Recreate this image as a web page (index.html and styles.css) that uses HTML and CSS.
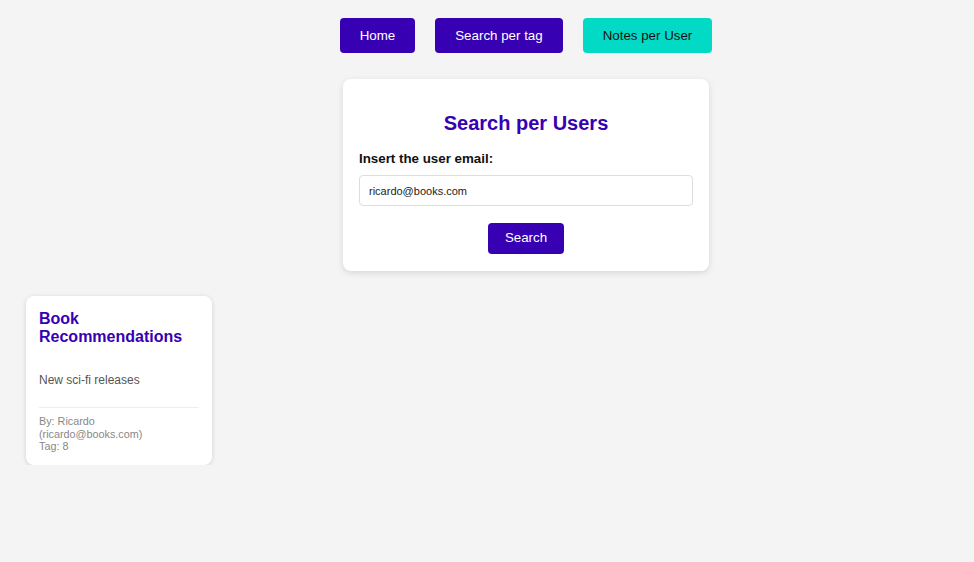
FILE: index.html
```html
<!DOCTYPE html>
<html>
<head>
<meta charset="utf-8">
<link rel="stylesheet" href="styles.css">
</head>
<body>
<div class="top">
  <nav class="nav">
    <button class="btn primary">Home</button>
    <button class="btn primary">Search per tag</button>
    <button class="btn secondary">Notes per User</button>
  </nav>
  <section class="search-card">
    <h2 class="title">Search per Users</h2>
    <label class="label">Insert the user email:</label>
    <input class="input" type="text" value="ricardo@books.com">
    <div class="actions"><button class="btn primary small">Search</button></div>
  </section>
</div>
<div class="notes">
  <article class="note">
    <h3 class="note-title">Book Recommendations</h3>
    <p class="note-body">New sci-fi releases</p>
    <div class="note-meta">
      <div>By: Ricardo (ricardo@books.com)</div>
      <div>Tag: 8</div>
    </div>
  </article>
</div>
</body>
</html>
```
FILE: styles.css
```css
* { box-sizing: border-box; }
html, body { margin: 0; }
body {
  background: #f4f4f4;
  font-family: "Liberation Sans", Arial, sans-serif;
  padding: 18px 0 0 0;
}
.top {
  padding-left: 78px;
  display: flex;
  flex-direction: column;
  align-items: center;
}
.nav {
  display: flex;
  gap: 20px;
}
.btn {
  font-family: "Liberation Sans", Arial, sans-serif;
  font-size: 13.33px;
  line-height: 16px;
  border: none;
  border-radius: 4px;
  padding: 10px 20px 9px;
  cursor: pointer;
}
.primary { background: #3700b3; color: #fff; }
.secondary { background: #03dac6; color: #111; }
.search-card {
  margin-top: 26px;
  width: 366px;
  background: #fff;
  border-radius: 8px;
  box-shadow: 0 2px 6px rgba(0,0,0,0.12);
  padding: 30px 16px 17px;
}
.title {
  margin: 0 0 14px;
  text-align: center;
  color: #3700b3;
  font-size: 20px;
  line-height: 28px;
}
.label {
  display: block;
  font-weight: bold;
  font-size: 13.33px;
  line-height: 16px;
  color: #111;
  margin-bottom: 8px;
}
.input {
  display: block;
  width: 100%;
  height: 31px;
  border: 1px solid #ddd;
  border-radius: 4px;
  padding: 0 9px;
  font-family: "Liberation Sans", Arial, sans-serif;
  font-size: 11px;
  color: #222;
  background: #fff;
}
.actions {
  display: flex;
  justify-content: center;
  margin-top: 17px;
}
.small { padding: 7px 17px 8px; }
.notes {
  padding: 25px 0 0 26px;
  display: flex;
}
.note {
  width: 186px;
  background: #fff;
  border-radius: 8px;
  box-shadow: 0 1px 5px rgba(0,0,0,0.14);
  padding: 14px 13px 12px;
}
.note-title {
  margin: 0;
  color: #3700b3;
  font-size: 16px;
  line-height: 18px;
}
.note-body {
  margin: 26px 0 0;
  font-size: 12px;
  line-height: 16px;
  color: #555;
}
.note-meta {
  margin-top: 19px;
  border-top: 1px solid #eee;
  padding-top: 7px;
  font-size: 10.8px;
  line-height: 12.5px;
  color: #888;
}
```
